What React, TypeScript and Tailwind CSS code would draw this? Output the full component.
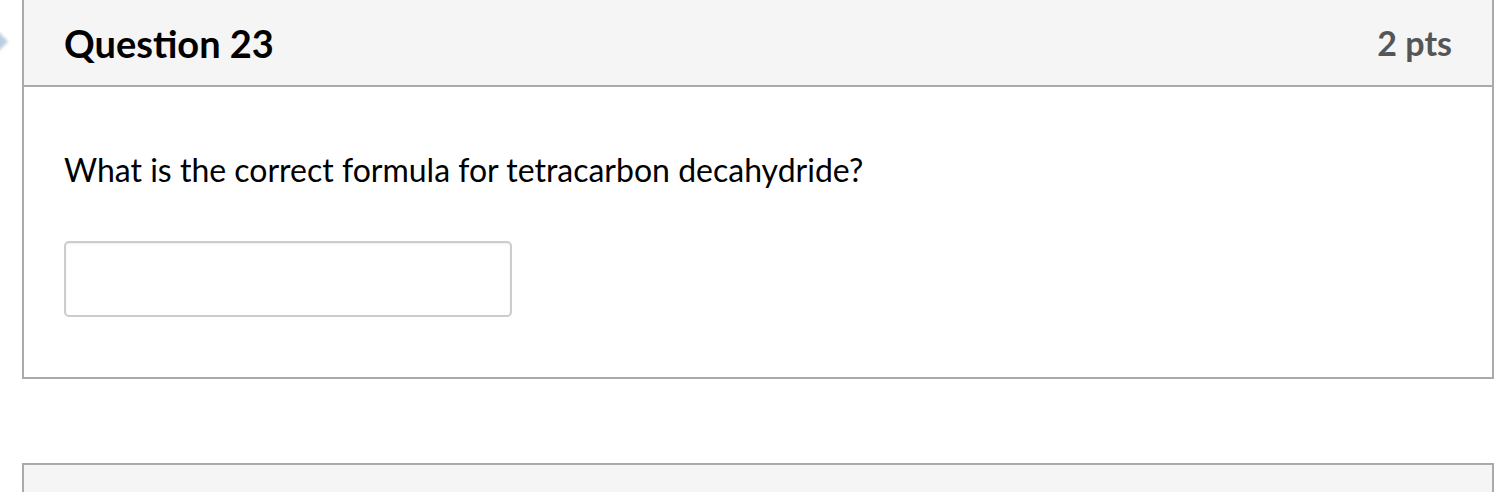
import React from 'react';

const App: React.FC = () => {
  return (
    <div className="min-h-screen bg-white relative overflow-hidden" style={{ fontFamily: 'Lato, "Open Sans", sans-serif' }}>
      {/* partially hidden flag marker on the left */}
      <div className="absolute left-[-10px] top-[34px] w-[15px] h-[15px] rotate-45 bg-[#bccde0] blur-[1.5px]"></div>

      <div className="ml-[22px] mr-[8px] border-x-2 border-b-2 border-[#aaaaaa]">
        <div className="h-[87px] bg-[#f5f5f5] border-b-2 border-[#aaaaaa] px-[40px] flex items-center justify-between">
          <h2 className="text-[38px] font-bold text-black leading-none">Question 23</h2>
          <span className="text-[34px] font-bold text-[#555555] leading-none">2 pts</span>
        </div>
        <div className="px-[40px] pt-[64px] pb-[60px]">
          <p className="text-[32px] text-black leading-[38px]">What is the correct formula for tetracarbon decahydride?</p>
          <div className="mt-[52px]">
            <input
              type="text"
              className="block w-[448px] h-[76px] border-2 border-[#cccccc] rounded-[5px] bg-white shadow-[inset_0_1px_2px_rgba(0,0,0,0.08)] outline-none"
            />
          </div>
        </div>
      </div>

      <div className="mt-[84px] ml-[22px] mr-[8px] h-[40px] border-x-2 border-t-2 border-[#aaaaaa] bg-[#f5f5f5]"></div>
    </div>
  );
};

export default App;
